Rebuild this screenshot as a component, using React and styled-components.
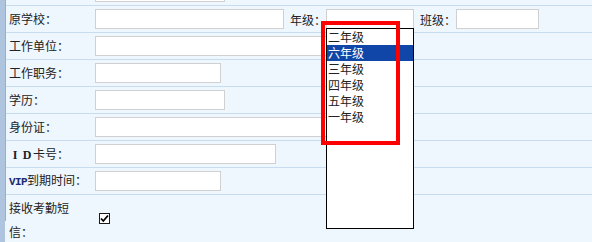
import React from "react";
import styled, { createGlobalStyle } from "styled-components";

const GlobalStyle = createGlobalStyle`
  html, body { margin: 0; padding: 0; background: #eef6fe; }
  body {
    font-family: "Noto Sans CJK SC", "Liberation Sans", sans-serif;
    font-size: 12px;
    color: #222;
  }
`;

const Page = styled.div`
  position: relative;
  width: 592px;
  height: 242px;
  overflow: hidden;
  box-sizing: border-box;
  border-left: 5px solid #afc4df;
  background: #eef6fe;
`;

const Inner = styled.div`
  height: 100%;
  border-left: 1px solid #94afd3;
`;

const Form = styled.div`
  margin-top: -21px;
  display: flex;
  flex-direction: column;
`;

const Row = styled.div`
  display: flex;
  align-items: center;
  min-height: 26px;
  padding: ${(p) => (p.$tall ? "1px 0 0" : "0")};
  border-bottom: 1px solid #c8dcef;
`;

const Label = styled.div`
  width: 80px;
  flex: none;
  padding-left: 3px;
  margin-right: 6px;
  line-height: 24px;
  font-size: 12px;
  color: #222;
`;

const Field = styled.div`
  display: flex;
  align-items: center;
`;

const TextInput = styled.input`
  box-sizing: border-box;
  width: ${(p) => p.$w}px;
  height: 20px;
  margin: 0;
  padding: 0 2px;
  border: 1px solid #d0d0d0;
  background: #fff;
  outline: none;
  font-size: 12px;
`;

const InlineLabel = styled.span`
  margin-left: 6px;
  width: 36px;
  flex: none;
  font-size: 12px;
  color: #222;
`;

const Wide = styled.span`
  display: inline-block;
  width: 12px;
  text-align: center;
  font-family: "Liberation Serif", serif;
  font-weight: bold;
  font-size: 12px;
  color: #222;
`;

const Vip = styled.span`
  font-family: "Liberation Mono", monospace;
  font-weight: bold;
  font-size: 11px;
  color: #1c2a6e;
  letter-spacing: -0.6px;
`;

const CheckBox = styled.span`
  display: inline-flex;
  align-items: center;
  justify-content: center;
  box-sizing: border-box;
  width: 11px;
  height: 11px;
  margin-left: 4px;
  margin-top: -3px;
  border: 1px solid #1a1a1a;
  background: #fff;
`;

const ListBox = styled.div`
  position: absolute;
  left: 321px;
  top: 28px;
  width: 88px;
  height: 201px;
  box-sizing: border-box;
  border: 1px solid #000;
  background: #fff;
`;

const Option = styled.div`
  height: 16px;
  line-height: 15px;
  padding-left: 1px;
  font-size: 12px;
  color: ${(p) => (p.$selected ? "#fff" : "#222")};
  background: ${(p) => (p.$selected ? "#1046a8" : "transparent")};
`;

const Highlight = styled.div`
  position: absolute;
  left: 316px;
  top: 21px;
  width: 79px;
  height: 124px;
  box-sizing: border-box;
  border: 4px solid #ff0000;
  pointer-events: none;
`;

const grades = ["二年级", "六年级", "三年级", "四年级", "五年级", "一年级"];

export default function App() {
  return (
    <>
      <GlobalStyle />
      <Page>
        <Inner>
          <Form>
            <Row>
              <Label />
              <Field>
                <TextInput $w={130} />
              </Field>
            </Row>
            <Row>
              <Label>原学校：</Label>
              <Field>
                <TextInput $w={189} />
                <InlineLabel>年级：</InlineLabel>
                <TextInput $w={88} />
                <InlineLabel>班级：</InlineLabel>
                <TextInput $w={83} />
              </Field>
            </Row>
            <Row>
              <Label>工作单位：</Label>
              <Field>
                <TextInput $w={240} />
              </Field>
            </Row>
            <Row>
              <Label>工作职务：</Label>
              <Field>
                <TextInput $w={126} />
              </Field>
            </Row>
            <Row>
              <Label>学历：</Label>
              <Field>
                <TextInput $w={130} />
              </Field>
            </Row>
            <Row>
              <Label>身份证：</Label>
              <Field>
                <TextInput $w={240} />
              </Field>
            </Row>
            <Row>
              <Label>
                <Wide>I</Wide>
                <Wide>D</Wide>卡号：
              </Label>
              <Field>
                <TextInput $w={181} />
              </Field>
            </Row>
            <Row>
              <Label>
                <Vip>VIP</Vip>到期时间：
              </Label>
              <Field>
                <TextInput $w={126} />
              </Field>
            </Row>
            <Row $tall>
              <Label>接收考勤短信：</Label>
              <Field>
                <CheckBox>
                  <svg width="9" height="9" viewBox="0 0 9 9">
                    <path
                      d="M1 4.5 L3.3 7 L8 1.5"
                      fill="none"
                      stroke="#000"
                      strokeWidth="1.8"
                    />
                  </svg>
                </CheckBox>
              </Field>
            </Row>
          </Form>
        </Inner>
        <ListBox>
          {grades.map((g) => (
            <Option key={g} $selected={g === "六年级"}>
              {g}
            </Option>
          ))}
        </ListBox>
        <Highlight />
      </Page>
    </>
  );
}
